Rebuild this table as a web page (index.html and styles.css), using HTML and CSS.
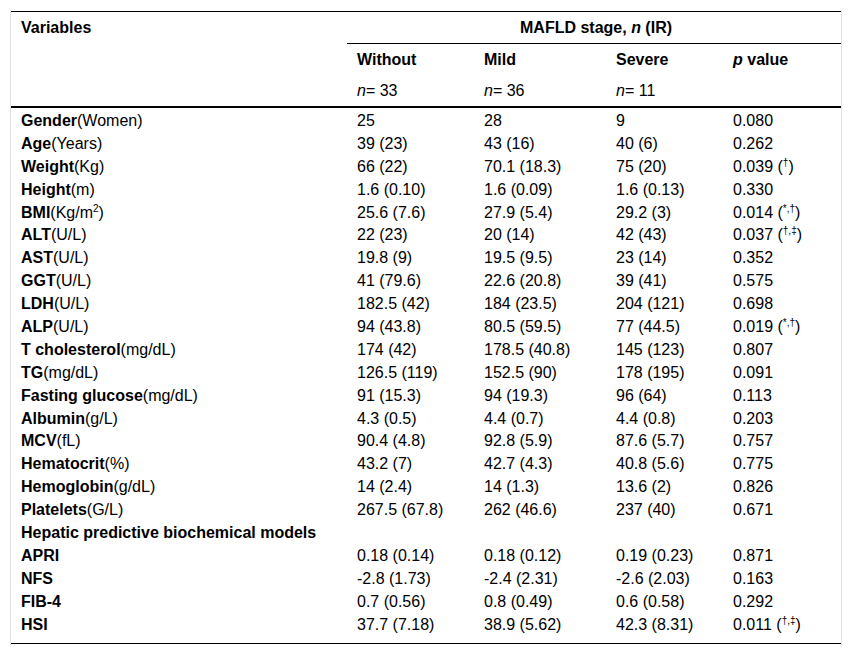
FILE: index.html
```html
<!DOCTYPE html>
<html lang="en">
<head>
<meta charset="utf-8">
<title>MAFLD stage table</title>
<link rel="stylesheet" href="styles.css">
</head>
<body>
<div class="frame">
<table class="data">
<colgroup>
<col class="c-var"><col class="c-without"><col class="c-mild"><col class="c-severe"><col class="c-p">
</colgroup>
<thead>
<tr class="h1">
<th rowspan="3" class="var-head">Variables</th>
<th colspan="4" class="group-head">MAFLD stage, <i>n</i> (IR)</th>
</tr>
<tr class="h2">
<th>Without</th><th>Mild</th><th>Severe</th><th><i>p</i> value</th>
</tr>
<tr class="h3">
<td><i>n</i>= 33</td><td><i>n</i>= 36</td><td><i>n</i>= 11</td><td></td>
</tr>
</thead>
<tbody>
<tr class="first"><td><b>Gender</b>(Women)</td><td>25</td><td>28</td><td>9</td><td>0.080</td></tr>
<tr><td><b>Age</b>(Years)</td><td>39 (23)</td><td>43 (16)</td><td>40 (6)</td><td>0.262</td></tr>
<tr><td><b>Weight</b>(Kg)</td><td>66 (22)</td><td>70.1 (18.3)</td><td>75 (20)</td><td>0.039 (<sup>†</sup>)</td></tr>
<tr><td><b>Height</b>(m)</td><td>1.6 (0.10)</td><td>1.6 (0.09)</td><td>1.6 (0.13)</td><td>0.330</td></tr>
<tr><td><b>BMI</b>(Kg/m<sup>2</sup>)</td><td>25.6 (7.6)</td><td>27.9 (5.4)</td><td>29.2 (3)</td><td>0.014 (<sup>*,†</sup>)</td></tr>
<tr><td><b>ALT</b>(U/L)</td><td>22 (23)</td><td>20 (14)</td><td>42 (43)</td><td>0.037 (<sup>†,‡</sup>)</td></tr>
<tr><td><b>AST</b>(U/L)</td><td>19.8 (9)</td><td>19.5 (9.5)</td><td>23 (14)</td><td>0.352</td></tr>
<tr><td><b>GGT</b>(U/L)</td><td>41 (79.6)</td><td>22.6 (20.8)</td><td>39 (41)</td><td>0.575</td></tr>
<tr><td><b>LDH</b>(U/L)</td><td>182.5 (42)</td><td>184 (23.5)</td><td>204 (121)</td><td>0.698</td></tr>
<tr><td><b>ALP</b>(U/L)</td><td>94 (43.8)</td><td>80.5 (59.5)</td><td>77 (44.5)</td><td>0.019 (<sup>*,†</sup>)</td></tr>
<tr><td><b>T cholesterol</b>(mg/dL)</td><td>174 (42)</td><td>178.5 (40.8)</td><td>145 (123)</td><td>0.807</td></tr>
<tr><td><b>TG</b>(mg/dL)</td><td>126.5 (119)</td><td>152.5 (90)</td><td>178 (195)</td><td>0.091</td></tr>
<tr><td><b>Fasting glucose</b>(mg/dL)</td><td>91 (15.3)</td><td>94 (19.3)</td><td>96 (64)</td><td>0.113</td></tr>
<tr><td><b>Albumin</b>(g/L)</td><td>4.3 (0.5)</td><td>4.4 (0.7)</td><td>4.4 (0.8)</td><td>0.203</td></tr>
<tr><td><b>MCV</b>(fL)</td><td>90.4 (4.8)</td><td>92.8 (5.9)</td><td>87.6 (5.7)</td><td>0.757</td></tr>
<tr><td><b>Hematocrit</b>(%)</td><td>43.2 (7)</td><td>42.7 (4.3)</td><td>40.8 (5.6)</td><td>0.775</td></tr>
<tr><td><b>Hemoglobin</b>(g/dL)</td><td>14 (2.4)</td><td>14 (1.3)</td><td>13.6 (2)</td><td>0.826</td></tr>
<tr><td><b>Platelets</b>(G/L)</td><td>267.5 (67.8)</td><td>262 (46.6)</td><td>237 (40)</td><td>0.671</td></tr>
<tr><td><b>Hepatic predictive biochemical models</b></td><td></td><td></td><td></td><td></td></tr>
<tr><td><b>APRI</b></td><td>0.18 (0.14)</td><td>0.18 (0.12)</td><td>0.19 (0.23)</td><td>0.871</td></tr>
<tr><td><b>NFS</b></td><td>-2.8 (1.73)</td><td>-2.4 (2.31)</td><td>-2.6 (2.03)</td><td>0.163</td></tr>
<tr><td><b>FIB-4</b></td><td>0.7 (0.56)</td><td>0.8 (0.49)</td><td>0.6 (0.58)</td><td>0.292</td></tr>
<tr class="last"><td><b>HSI</b></td><td>37.7 (7.18)</td><td>38.9 (5.62)</td><td>42.3 (8.31)</td><td>0.011 (<sup>†,‡</sup>)</td></tr>
</tbody>
</table>
</div>
</body>
</html>
```

FILE: styles.css
```css
html, body {
  margin: 0;
  padding: 0;
  background: #ffffff;
}

body {
  padding: 10px;
  font-family: "Liberation Sans", Arial, Helvetica, sans-serif;
  font-size: 16px;
  color: #000;
}

.frame {
  border-left: 1px solid #e2e2e2;
  border-right: 1px solid #e2e2e2;
  padding-top: 1px;
  padding-bottom: 1px;
}

.data {
  width: 100%;
  table-layout: fixed;
  border-collapse: separate;
  border-spacing: 0;
  border-top: 1px solid #000;
  border-bottom: 1px solid #000;
}

.c-var { width: 336px; }
.c-without { width: 127px; }
.c-mild { width: 132px; }
.c-severe { width: 117px; }
.c-p { width: 118px; }

.data th,
.data td {
  text-align: left;
  vertical-align: top;
  padding: 2px 6px 2.9px 10px;
  line-height: 18px;
  white-space: nowrap;
}

.data th {
  font-weight: bold;
}

.data .h1 th {
  padding-top: 7px;
  padding-bottom: 6px;
}

.data .group-head {
  text-align: center;
  border-bottom: 1px solid #000;
}

.data .h2 th {
  padding-top: 7px;
  padding-bottom: 7px;
}

.data .h3 td {
  padding-top: 6px;
  padding-bottom: 6px;
  border-bottom: 2px solid #000;
}

.data .h1 .var-head {
  padding-top: 7px;
  border-bottom: 2px solid #000;
}

.data tbody .first td {
  padding-top: 4px;
}

.data tbody .last td {
  padding-bottom: 9.2px;
}

.data sup {
  font-size: 10px;
  line-height: 0;
  vertical-align: 6px;
}
```
